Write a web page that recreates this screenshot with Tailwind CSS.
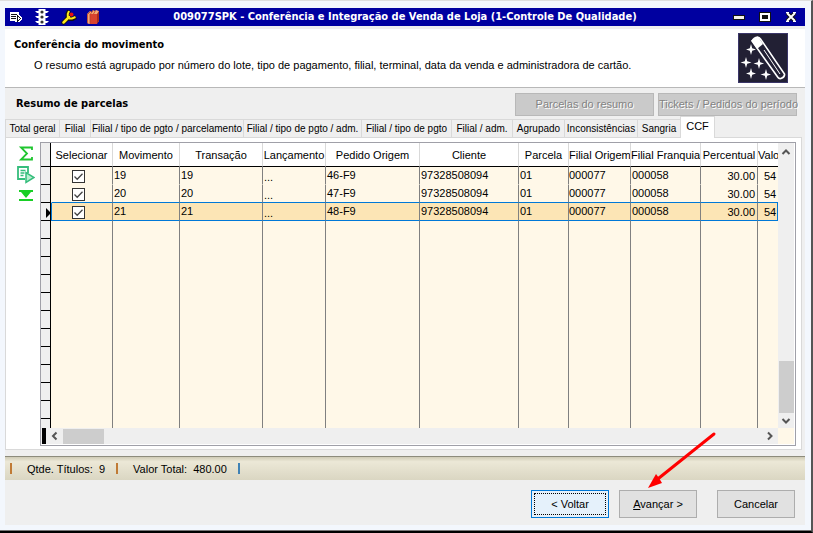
<!DOCTYPE html>
<html lang="pt-BR">
<head>
  <meta charset="UTF-8" />
  <meta name="viewport" content="width=device-width, initial-scale=1.0" />
  <title>009077SPK - Conferência e Integração de Venda de Loja</title>
  <script src="https://cdn.jsdelivr.net/npm/@tailwindcss/browser@4"></script>
</head>
<body class="h-screen overflow-hidden bg-[#f3f7fd] font-['Tahoma','Liberation_Sans',sans-serif] text-[11px] leading-4 text-black">

  <div class="relative flex h-full flex-col border-t border-r-2 border-b-2 border-t-[#dedede] border-r-[#555] border-b-black pt-[7px] pr-[6px] pb-[6px] pl-[5px] shadow-[inset_0_-1px_#777]">

    <!-- Title bar -->
    <header class="grid h-[18px] shrink-0 grid-cols-[1fr_auto_1fr] items-center bg-[#0000a0] text-white">
      <div class="flex items-center gap-3 pl-1">
        <svg class="h-4 w-3.5" viewBox="0 0 14 16" shape-rendering="crispEdges">
          <path d="M1 3h9v3h1v1h1v1h1v3h-1v1h-1v1H6v-1H1z" fill="#fff" />
          <path d="M2 5h6v1H2zM2 7h5v1H2zM2 9h5v1H2zM8 6h1v7H8zM9 7h1v1H9zM10 8h1v1h-1zM11 9h1v1h-1zM9 12h1v-1H9zM10 11h1v-1h-1z" fill="#111" />
        </svg>
        <svg class="h-4 w-3.5" viewBox="0 0 14 16">
          <path d="M3.500 0h7v16h-7z" fill="#fff" />
          <path d="M0 2h4v2H2zM0 7h4v2H2zM0 12h4v2H2zM14 2h-4v2h2zM14 7h-4v2h2zM14 12h-4v2h2z" fill="#fff" />
          <circle cx="7" cy="3" r="1.600" fill="#333" /><circle cx="7" cy="8" r="1.600" fill="#333" /><circle cx="7" cy="13" r="1.600" fill="#333" />
        </svg>
        <svg class="h-4 w-4" viewBox="0 0 16 16">
          <path d="M2.500 13.500L8 8" stroke="#111" stroke-width="4.500" stroke-linecap="round" />
          <path d="M8 1.500L6.500 5v3l2 2h3l3.500-2" fill="none" stroke="#111" stroke-width="4" />
          <path d="M2.500 13.500L8 8" stroke="#ffe818" stroke-width="2.500" stroke-linecap="round" />
          <path d="M8 2L6.800 5v2.500l1.700 2H11l3.500-1.500" fill="none" stroke="#ffe818" stroke-width="2" />
          <circle cx="10.500" cy="5.500" r="2" fill="#e81010" />
        </svg>
        <svg class="-ml-1 h-4 w-4" viewBox="0 0 16 16">
          <path d="M2 5l3-3 2 1 1-2 2 1 1-1 3 1v10l-3 3H4l-2-1z" fill="#f2a878" />
          <path d="M5 5h7v10H5z" fill="#d8432f" />
          <path d="M12 5l2-3v10l-2 3z" fill="#a82c1c" />
          <path d="M3 5l3-3M5.500 5l3-4M8.500 5l2-3.500" stroke="#c8562c" stroke-width="1" />
          <path d="M5 5v10M2.500 5v9" stroke="#b5402a" stroke-width=".8" />
        </svg>
      </div>
      <h1 class="font-['Tahoma','DejaVu_Sans_Condensed',sans-serif] text-[11px] font-bold whitespace-nowrap">009077SPK - Conferência e Integração de Venda de Loja (1-Controle De Qualidade)</h1>
      <div class="flex items-center justify-end gap-3 pr-[7px]">
        <button class="h-4 w-3.5" aria-label="Minimizar"><svg class="h-4 w-3.5" viewBox="0 0 14 16" shape-rendering="crispEdges"><path d="M1 6h12v5H1z" fill="#111" /><path d="M2 7h10v3H2z" fill="#f4f0ea" /></svg></button>
        <button class="h-4 w-3.5" aria-label="Maximizar"><svg class="h-4 w-3.5" viewBox="0 0 14 16" shape-rendering="crispEdges"><path d="M1 3h12v10H1z" fill="#111" /><path d="M2 4h10v8H2zM4 6v4h6V6z" fill="#fff" fill-rule="evenodd" /></svg></button>
        <button class="h-4 w-3.5" aria-label="Fechar"><svg class="h-4 w-3.5" viewBox="0 0 14 16"><path d="M3 4l8 8M11 4l-8 8" stroke="#111" stroke-width="4" /><path d="M3 4l8 8M11 4l-8 8" stroke="#fff" stroke-width="2" /><path d="M2 3.500h3M9 3.500h3M2 12.500h3M9 12.500h3" stroke="#fff" /></svg></button>
      </div>
    </header>

    <main class="flex min-h-0 flex-1 flex-col bg-[#efefef] pt-[3px]">

      <!-- Wizard heading -->
      <section class="flex h-[59px] shrink-0 justify-between border-b border-[#b8b8b8] bg-white pr-[17px] pl-[9px]">
        <div class="pt-2">
          <h2 class="font-['Tahoma','DejaVu_Sans_Condensed',sans-serif] text-[11px] font-bold">Conferência do movimento</h2>
          <p class="pt-1 pl-5">O resumo está agrupado por número do lote, tipo de pagamento, filial, terminal, data da venda e administradora de cartão.</p>
        </div>
        <svg class="mt-1 h-[50px] w-[50px]" viewBox="0 0 50 50">
          <rect width="50" height="50" fill="#222034" />
          <rect x=".5" y=".5" width="49" height="49" fill="none" stroke="#3a3568" />
          <path d="M14 8L19 4.500Q21 4 22.500 6L46.500 41Q47 44 43 45.500Q41 46 40 44.500Z" fill="none" stroke="#fff" stroke-width="1.600" />
          <path d="M13.500 7.500Q16 3 20 3.500L25 11L19 16Z" fill="#fff" />
          <path d="M26 17l16 24" stroke="#fff" stroke-width="1" />
          <g fill="#fff">
            <path d="M13 11l1.200 4.300L18 16.500l-3.800 1.200L13 22l-1.200-4.300L8 16.500l3.800-1.200z" />
            <path d="M8 24l1.200 4.300L13.500 29.500l-4.300 1.200L8 35l-1.200-4.300L2.500 29.500l4.300-1.200z" />
            <path d="M21 25l1.200 4.300L26 30.500l-3.800 1.200L21 36l-1.200-4.300L15.500 30.500l4.300-1.200z" />
            <path d="M13 35l1.200 4.300L18 40.500l-3.800 1.200L13 46l-1.200-4.300L8 40.500l3.800-1.200z" />
            <path d="M28 36l1.200 4.300L33 41.500l-3.800 1.200L28 47l-1.200-4.300L22.500 41.500l4.300-1.200z" />
          </g>
        </svg>
      </section>

      <div class="flex h-7 shrink-0 items-center pt-1 pr-2 pl-[11px]">
        <h3 class="flex-1 font-['Tahoma','DejaVu_Sans_Condensed',sans-serif] text-[11px] font-bold">Resumo de parcelas</h3>
        <div class="flex gap-1 text-[#838383]">
          <button class="h-[23px] w-[139px] border border-[#b8b8b8] bg-[#cacaca] whitespace-nowrap [text-shadow:1px_1px_#fff]" disabled>Parcelas do resumo</button>
          <button class="h-[23px] w-[139px] border border-[#b8b8b8] bg-[#cacaca] whitespace-nowrap [text-shadow:1px_1px_#fff]" disabled>Tickets / Pedidos do período</button>
        </div>
      </div>

      <!-- Tabs -->
      <nav class="flex h-[21px] shrink-0 items-end text-[10px] whitespace-nowrap" role="tablist">
        <button class="h-[18px] w-[55px] border border-b-0 border-[#d9d9d9]" role="tab">Total geral</button>
        <button class="h-[18px] w-[31px] border-t border-r border-[#d9d9d9]" role="tab">Filial</button>
        <button class="h-[18px] w-[153px] border-t border-r border-[#d9d9d9]" role="tab">Filial / tipo de pgto / parcelamento</button>
        <button class="h-[18px] w-[118px] border-t border-r border-[#d9d9d9]" role="tab">Filial / tipo de pgto / adm.</button>
        <button class="h-[18px] w-[90px] border-t border-r border-[#d9d9d9]" role="tab">Filial / tipo de pgto</button>
        <button class="h-[18px] w-[61px] border-t border-r border-[#d9d9d9]" role="tab">Filial / adm.</button>
        <button class="h-[18px] w-[52px] border-t border-r border-[#d9d9d9]" role="tab">Agrupado</button>
        <button class="h-[18px] w-[73px] border-t border-r border-[#d9d9d9]" role="tab">Inconsistências</button>
        <button class="h-[18px] w-[42px] border-t border-[#d9d9d9]" role="tab">Sangria</button>
        <button class="relative -mb-px h-[22px] w-[35px] border border-b-0 border-[#d9d9d9] bg-white pb-1 text-[11px]" role="tab" aria-selected="true">CCF</button>
      </nav>

      <!-- Tab page -->
      <section class="mr-[3px] flex min-h-0 flex-1 border border-[#d9d9d9] bg-white pt-1 pr-[5px] pb-[3px]">
        <div class="flex w-[34px] shrink-0 flex-col items-center gap-[3px] pt-[3px] pl-[6px]">
          <button class="h-[18px] w-[18px]" aria-label="Somar"><svg class="h-[18px] w-[18px]" viewBox="0 0 18 18"><path d="M15 5V2.500H4L10 8.500L4 14.500H15V12" fill="none" stroke="#1fc52f" stroke-width="1.800" /></svg></button>
          <button class="h-[18px] w-[18px]" aria-label="Executar"><svg class="h-[18px] w-[18px]" viewBox="0 0 18 18"><path d="M8 13H1V1h10v6" fill="none" stroke="#35bd7c" stroke-width="1.800" /><path d="M3.500 4.500h5M3.500 7h4M3.500 9.500h3" stroke="#35bd7c" stroke-width="1.300" /><path d="M9 6.500v10l8-5z" fill="#b9efd0" stroke="#35bd7c" stroke-width="1.500" /></svg></button>
          <button class="h-[18px] w-[18px]" aria-label="Ir para o fim"><svg class="h-[18px] w-[18px]" viewBox="0 0 18 18"><path d="M2 3h14v2h-2l-5 6-5-6H2zM2 12h14v2H2z" fill="#18cf25" /></svg></button>
        </div>

        <div class="flex min-w-0 flex-1 flex-col border border-[#a0a0a8] pr-px pb-px">
          <div class="flex min-h-0 flex-1">
            <div class="min-w-0 flex-1 overflow-hidden bg-[#fff8e8]">
              <table class="w-full table-fixed border-separate border-spacing-0 [&_td]:h-[18px] [&_td]:overflow-hidden [&_td]:p-0 [&_td]:leading-4 [&_td]:whitespace-nowrap">
                <colgroup>
                  <col class="w-[10px]" /><col class="w-[62px]" /><col class="w-[67px]" /><col class="w-[83px]" /><col class="w-[63px]" /><col class="w-[94px]" />
                  <col class="w-[99px]" /><col class="w-[50px]" /><col class="w-[62px]" /><col class="w-[70px]" /><col class="w-[57px]" /><col />
                </colgroup>
                <thead class="[&_th]:h-6 [&_th]:overflow-hidden [&_th]:border-r [&_th]:border-b [&_th]:border-r-[#d9d9d9] [&_th]:border-b-black [&_th]:bg-white [&_th]:p-0 [&_th]:text-center [&_th]:font-normal [&_th]:whitespace-nowrap">
                  <tr>
                    <th class="border-r-black! bg-[#efefef]!"></th>
                    <th>Selecionar</th><th>Movimento</th><th>Transação</th><th>Lançamento</th><th>Pedido Origem</th>
                    <th>Cliente</th><th>Parcela</th><th>Filial Origem</th><th>Filial Franquia</th><th>Percentual</th><th class="border-r-0!">Valo</th>
                  </tr>
                </thead>
                <tbody id="rows"></tbody>
              </table>
            </div>
            <!-- Vertical scrollbar -->
            <div class="flex w-4 shrink-0 flex-col items-center bg-[#efefef]">
              <svg class="h-[18px] w-4" viewBox="0 0 16 18"><path d="M4.500 11L8 7.500L11.500 11" fill="none" stroke="#555" stroke-width="2" /></svg>
              <div class="flex-1"></div>
              <div class="h-[52px] w-[15px] bg-[#cdcdcd]"></div>
              <svg class="h-[15px] w-4" viewBox="0 0 16 15"><path d="M4.500 6L8 9.500L11.500 6" fill="none" stroke="#555" stroke-width="2" /></svg>
            </div>
          </div>
          <!-- Horizontal scrollbar -->
          <div class="flex h-4 shrink-0 bg-[#fff8e8]">
            <div class="flex min-w-0 flex-1 items-center bg-[#efefef]">
              <div class="ml-px h-4 w-1 bg-black"></div>
              <svg class="h-4 w-[17px]" viewBox="0 0 17 16"><path d="M10.500 4.500L7 8L10.500 11.500" fill="none" stroke="#555" stroke-width="2" /></svg>
              <div class="h-[15px] w-[41px] bg-[#cdcdcd]"></div>
              <div class="flex-1"></div>
              <svg class="h-4 w-4" viewBox="0 0 16 16"><path d="M6 4.500L9.500 8L6 11.500" fill="none" stroke="#555" stroke-width="2" /></svg>
            </div>
            <div class="w-4 shrink-0"></div>
          </div>
        </div>
      </section>

      <!-- Totals -->
      <div class="mt-[6px] flex h-6 shrink-0 items-center border-t border-[#8d8b7c] bg-linear-to-b from-[#cfcbb6] via-[#ece8d7] via-20% to-[#dad6c2] pl-[5px]">
        <span class="h-[11px] w-0.5 bg-[#c07a35]"></span>
        <span class="pl-[15px]">Qtde. Títulos:&nbsp; 9</span>
        <span class="ml-[11px] h-[11px] w-0.5 bg-[#c07a35]"></span>
        <span class="pl-[15px]">Valor Total:&nbsp; 480.00</span>
        <span class="ml-[11px] h-[11px] w-0.5 bg-[#3f82b5]"></span>
      </div>

      <footer class="flex h-[45px] shrink-0 justify-end pt-[10px] pr-[10px]">
        <button class="mr-[10px] h-7 w-[78px] border border-[#0078d7] bg-[#e5f1fb] p-0.5"><span class="flex h-full items-center justify-center border border-dotted border-black">&lt; Voltar</span></button>
        <button class="mr-5 h-7 w-[78px] border border-[#adadad] bg-[#e1e1e1]"><u>A</u>vançar &gt;</button>
        <button class="h-7 w-[78px] border border-[#adadad] bg-[#e1e1e1]">Cancelar</button>
      </footer>
    </main>

    <!-- Pointer to the next-step button -->
    <svg class="pointer-events-none absolute right-[94px] bottom-[39px] h-[62px] w-[70px]" viewBox="0 0 70 62">
      <path d="M67 4L12 48" stroke="#f00" stroke-width="3" stroke-linecap="round" />
      <path d="M1 58L9 44L12 48L15 53Z" fill="#f00" />
    </svg>
  </div>

  <script>
    const data = [
      ['19', '46-F9'],
      ['20', '47-F9'],
      ['21', '48-F9'],
    ];
    const selected = 2;

    const body = document.getElementById('rows');
    let html = '';

    data.forEach(([mov, pedido], i) => {
      const current = i === selected;
      const line = current || i === selected - 1 ? 'border-b-[#0078d7]' : 'border-b-transparent';
      const cell = `border-r border-b border-r-[#808080] ${line} align-top`;
      html += `
        <tr class="${current ? 'bg-[#fce5b5]' : 'bg-[#fff8e8]'}">
          <td class="border-r border-b border-black bg-[#efefef]">${current ? '<svg class="ml-1 h-3 w-1.5" viewBox="0 0 6 12"><path d="M1 2v10l5-5z" fill="#000" /></svg>' : ''}</td>
          <td class="${cell} ${current ? 'border-l border-l-[#0078d7]' : 'border-l border-l-transparent'}">
            <label class="relative mt-[3px] ml-5 block h-[13px] w-[13px]">
              <input type="checkbox" checked aria-label="Selecionar ${mov}" class="block h-[13px] w-[13px] appearance-none border border-[#333] bg-white" />
              <svg class="absolute inset-0 h-[13px] w-[13px]" viewBox="0 0 13 13"><path d="M2.500 6.500L5.200 9.200L10.500 3.700" fill="none" stroke="#444" stroke-width="1.300" /></svg>
            </label>
          </td>
          <td class="${cell}"><span class="pl-px">${mov}</span></td>
          <td class="${cell}"><span class="pl-px">${mov}</span></td>
          <td class="${cell}"><span class="block h-[17px] pt-0.5 pl-px">...</span></td>
          <td class="${cell}"><span class="pl-px">${pedido}</span></td>
          <td class="${cell}"><span class="pl-px">97328508094</span></td>
          <td class="${cell}"><span class="pl-px">01</span></td>
          <td class="${cell}">000077</td>
          <td class="${cell}"><span class="pl-px">000058</span></td>
          <td class="${cell} text-right"><span class="block h-[17px] pt-px pr-0.5">30.00</span></td>
          <td class="border-b ${line} ${current ? 'border-r border-r-[#0078d7]' : ''} align-top"><span class="block h-[17px] pt-px pl-[6px]">54</span></td>
        </tr>`;
    });

    // empty rows fill the rest of the grid
    for (let i = 0; i < 60; i++) {
      html += '<tr><td class="border-r border-b border-black bg-[#efefef]"></td>' +
        '<td class="border-r border-[#808080]"></td>'.repeat(10) + '<td></td></tr>';
    }
    body.innerHTML = html;
  </script>
</body>
</html>
